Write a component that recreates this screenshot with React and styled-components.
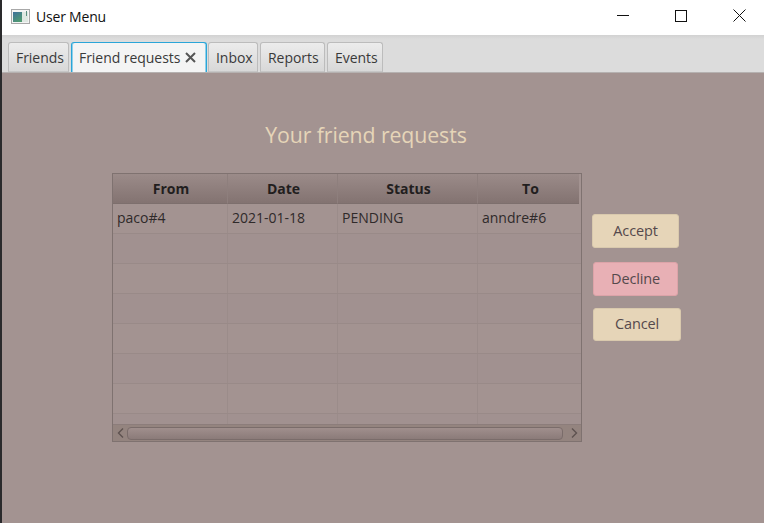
import React from "react";
import styled, { createGlobalStyle } from "styled-components";

const GlobalStyle = createGlobalStyle`
  html, body {
    margin: 0;
    padding: 0;
    width: 764px;
    height: 523px;
    overflow: hidden;
    background: #a39391;
  }
  * {
    box-sizing: border-box;
  }
`;

const columns = [
  { name: "From", width: 115 },
  { name: "Date", width: 110 },
  { name: "Status", width: 140 },
  { name: "To", width: 101 },
];

const rows = [["paco#4", "2021-01-18", "PENDING", "anndre#6"], [], [], [], [], [], [], []];

const tabs = [
  { name: "Friends", width: 61 },
  { name: "Friend requests", width: 136 },
  { name: "Inbox", width: 50 },
  { name: "Reports", width: 65 },
  { name: "Events", width: 56 },
];

const App = () => {
  return (
    <Screen>
      <GlobalStyle />
      <DesktopEdge />
      <Window>
        <TitleBar>
          <AppIcon>
            <svg width="20" height="16" viewBox="0 0 20 16">
              <defs>
                <linearGradient id="appPane" x1="0" y1="0" x2="0.6" y2="1">
                  <stop offset="0" stopColor="#3d6f9a" />
                  <stop offset="1" stopColor="#4f9a72" />
                </linearGradient>
              </defs>
              <rect x="0.5" y="0.5" width="18" height="14" fill="#f4f4f4" stroke="#a8a8a8" />
              <rect x="2" y="3" width="9" height="10" fill="url(#appPane)" />
              <rect x="11" y="3" width="6" height="10" fill="#dfe8e2" />
              <rect x="15" y="2" width="1" height="5" fill="#5c8f80" />
            </svg>
          </AppIcon>
          <WindowTitle>User Menu</WindowTitle>
          <WindowControls>
            <svg width="12" height="12" viewBox="0 0 12 12">
              <path d="M0 5.5H12" stroke="#111" strokeWidth="1" />
            </svg>
            <svg width="12" height="12" viewBox="0 0 12 12">
              <rect x="0.5" y="0.5" width="11" height="11" fill="none" stroke="#111" />
            </svg>
            <svg width="13" height="13" viewBox="0 0 13 13">
              <path d="M0.5 0.5L12.5 12.5M12.5 0.5L0.5 12.5" stroke="#111" strokeWidth="1" />
            </svg>
          </WindowControls>
        </TitleBar>

        <TabHeader>
          {tabs.map((tab) => (
            <Tab key={tab.name} $width={tab.width} $active={tab.name === "Friend requests"}>
              {tab.name}
              {tab.name === "Friend requests" && (
                <CloseMark width="11" height="11" viewBox="0 0 11 11">
                  <path d="M1 1L10 10M10 1L1 10" stroke="#555555" strokeWidth="2" />
                </CloseMark>
              )}
            </Tab>
          ))}
        </TabHeader>

        <Content>
          <Heading>Your friend requests</Heading>
          <Body>
            <Table>
              <HeaderRow>
                {columns.map((col) => (
                  <HeaderCell key={col.name} $width={col.width}>
                    {col.name}
                  </HeaderCell>
                ))}
              </HeaderRow>
              <Rows>
                {rows.map((row, i) => (
                  <Row key={i} $odd={i % 2 === 1}>
                    {columns.map((col, j) => (
                      <Cell key={col.name} $width={col.width}>
                        {row[j]}
                      </Cell>
                    ))}
                  </Row>
                ))}
              </Rows>
              <ScrollBar>
                <ScrollArrow>
                  <svg width="7" height="10" viewBox="0 0 7 10">
                    <path d="M6 0.5L1.5 5L6 9.5" fill="none" stroke="#5e5250" strokeWidth="1.4" />
                  </svg>
                </ScrollArrow>
                <ScrollThumb />
                <ScrollArrow>
                  <svg width="7" height="10" viewBox="0 0 7 10">
                    <path d="M1 0.5L5.5 5L1 9.5" fill="none" stroke="#5e5250" strokeWidth="1.4" />
                  </svg>
                </ScrollArrow>
              </ScrollBar>
            </Table>

            <Actions>
              <ActionButton $width={87} $height={34} $indent={0} $after={14}>
                Accept
              </ActionButton>
              <ActionButton $width={85} $height={34} $indent={1} $after={12} $danger>
                Decline
              </ActionButton>
              <ActionButton $width={88} $height={33} $indent={1} $after={0}>
                Cancel
              </ActionButton>
            </Actions>
          </Body>
        </Content>
      </Window>
    </Screen>
  );
};

const Screen = styled.div`
  display: flex;
  width: 764px;
  height: 523px;
  font-family: "Open Sans", "Noto Sans", sans-serif;
`;

// 뒤에 보이는 바탕화면 가장자리
const DesktopEdge = styled.div`
  width: 2px;
  background: #2a2a2c;
`;

const Window = styled.div`
  flex: 1;
  display: flex;
  flex-direction: column;
  min-width: 0;
`;

const TitleBar = styled.div`
  display: flex;
  align-items: center;
  height: 35px;
  padding: 0 18px 2px 9px;
  background: #ffffff;
`;

const AppIcon = styled.div`
  display: flex;
  width: 20px;
  height: 16px;
  margin-right: 6px;
`;

const WindowTitle = styled.div`
  flex: 1;
  font-size: 14px;
  color: #111111;
  letter-spacing: -0.2px;
  margin-left: -1px;
`;

const WindowControls = styled.div`
  display: flex;
  align-items: center;
  gap: 46px;
  padding-bottom: 2px;
`;

const TabHeader = styled.div`
  display: flex;
  align-items: flex-end;
  gap: 2px;
  height: 38px;
  padding-left: 6px;
  background: linear-gradient(#d2d2d2 0, #dcdcdc 4px, #dcdcdc 100%);
  border-bottom: 1px solid #b5b1b0;
`;

const Tab = styled.div`
  display: flex;
  align-items: center;
  width: ${(p) => p.$width}px;
  height: 30px;
  margin-right: ${(p) => (p.$active ? "-1px" : "0")};
  padding: 0 0 0 7px;
  border: ${(p) => (p.$active ? "1px solid #2aa5d8" : "1px solid #bcbcbc")};
  border-bottom: ${(p) => (p.$active ? "none" : "1px solid #c6c6c6")};
  border-radius: 3px 3px 0 0;
  background: ${(p) =>
    p.$active ? "#f4f4f4" : "linear-gradient(#ececec, #d8d8d8)"};
  box-shadow: ${(p) => (p.$active ? "inset 1px 0 0 #8fd0ea, inset -1px 0 0 #8fd0ea" : "none")};
  font-size: 14px;
  letter-spacing: -0.05px;
  color: #3a3a3a;
  white-space: nowrap;
`;

const CloseMark = styled.svg`
  margin-left: 5px;
`;

const Content = styled.div`
  flex: 1;
  display: flex;
  flex-direction: column;
  padding-left: 110px;
  background: #a39391;
`;

const Heading = styled.div`
  width: 508px;
  margin-top: 47px;
  font-size: 21.3px;
  font-weight: 400;
  line-height: 30px;
  letter-spacing: -0.1px;
  text-align: center;
  color: #e6d5b8;
`;

const Body = styled.div`
  display: flex;
  margin-top: 23px;
`;

const Table = styled.div`
  display: flex;
  flex-direction: column;
  width: 470px;
  height: 269px;
  border: 1px solid #7f7270;
`;

const HeaderRow = styled.div`
  display: flex;
  height: 30px;
  flex-shrink: 0;
`;

const HeaderCell = styled.div`
  width: ${(p) => p.$width}px;
  display: flex;
  align-items: center;
  justify-content: center;
  padding-left: 2px;
  border-right: 1px solid #8e7f7d;
  border-bottom: 1px solid #7d6f6d;
  background: linear-gradient(#9b8b89, #837371);
  font-size: 14px;
  font-weight: 700;
  color: #221e1e;
  &:last-child {
    padding-left: 4px;
    border-right: none;
  }
`;

const Rows = styled.div`
  flex: 1;
  overflow: hidden;
`;

const Row = styled.div`
  display: flex;
  height: 30px;
  border-bottom: 1px solid #998a88;
  background: ${(p) => (p.$odd ? "#a19190" : "#a39391")};
`;

const Cell = styled.div`
  width: ${(p) => p.$width}px;
  display: flex;
  align-items: center;
  padding: 0 0 3px 4px;
  border-right: 1px solid #9b8c8a;
  font-size: 14px;
  color: #2f2a2a;
  &:last-child {
    border-right: none;
  }
`;

const ScrollBar = styled.div`
  display: flex;
  align-items: center;
  height: 17px;
  flex-shrink: 0;
  border-top: 1px solid #8c7d7b;
  background: #94847f;
`;

const ScrollArrow = styled.div`
  display: flex;
  align-items: center;
  justify-content: center;
  width: 14px;
  height: 100%;
  flex-shrink: 0;
`;

const ScrollThumb = styled.div`
  flex: 1;
  height: 13px;
  margin-right: 4px;
  border: 1px solid #7a6c6a;
  border-radius: 4px;
  background: linear-gradient(#a08f8d, #8b7b79);
`;

const Actions = styled.div`
  display: flex;
  flex-direction: column;
  margin: 41px 0 0 10px;
`;

const ActionButton = styled.div`
  display: flex;
  align-items: center;
  justify-content: center;
  width: ${(p) => p.$width}px;
  height: ${(p) => p.$height}px;
  margin-left: ${(p) => p.$indent}px;
  margin-bottom: ${(p) => p.$after}px;
  padding-bottom: 2px;
  border: 1px solid ${(p) => (p.$danger ? "#dca3a8" : "#d9c9ad")};
  border-radius: 3px;
  background: ${(p) => (p.$danger ? "#e8b0b5" : "#e6d5b8")};
  font-size: 14.5px;
  letter-spacing: -0.15px;
  color: #55494c;
`;

export default App;
